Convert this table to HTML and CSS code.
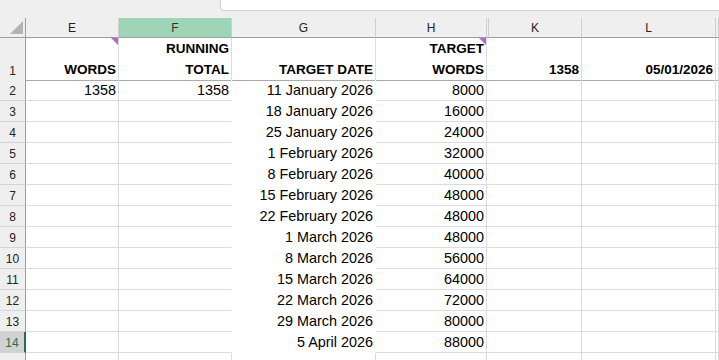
FILE: index.html
```html
<!DOCTYPE html>
<html>
<head>
<meta charset="utf-8">
<link rel="stylesheet" href="styles.css">
</head>
<body>
<div class="top"><div class="fbar"></div></div>
<div class="sheet">
  <div class="row hdr">
    <div class="corner"><span class="tri"></span></div>
    <div class="ch">E</div><div class="ch sel">F</div><div class="ch">G</div><div class="ch">H</div><div class="ch hidc"></div><div class="ch">K</div><div class="ch">L</div><div class="ch"></div>
  </div>
  <div class="row r1">
    <div class="rh">1</div>
    <div class="c b"><span class="note"></span><div>WORDS</div></div>
    <div class="c b"><div>RUNNING<br>TOTAL</div></div>
    <div class="c b"><div>TARGET DATE</div></div>
    <div class="c b"><span class="note"></span><div>TARGET<br>WORDS</div></div>
    <div class="c hid"></div>
    <div class="c b"><div>1358</div></div>
    <div class="c b"><div>05/01/2026</div></div>
    <div class="c"></div>
  </div>
  <div class="row rn"><div class="rh">2</div><div class="c">1358</div><div class="c fw">1358</div><div class="c wf">11 January 2026</div><div class="c">8000</div><div class="c hid"></div><div class="c"></div><div class="c"></div><div class="c"></div></div>
  <div class="row rn"><div class="rh">3</div><div class="c"></div><div class="c fw"></div><div class="c wf">18 January 2026</div><div class="c">16000</div><div class="c hid"></div><div class="c"></div><div class="c"></div><div class="c"></div></div>
  <div class="row rn"><div class="rh">4</div><div class="c"></div><div class="c fw"></div><div class="c wf">25 January 2026</div><div class="c">24000</div><div class="c hid"></div><div class="c"></div><div class="c"></div><div class="c"></div></div>
  <div class="row rn"><div class="rh">5</div><div class="c"></div><div class="c fw"></div><div class="c wf">1 February 2026</div><div class="c">32000</div><div class="c hid"></div><div class="c"></div><div class="c"></div><div class="c"></div></div>
  <div class="row rn"><div class="rh">6</div><div class="c"></div><div class="c fw"></div><div class="c wf">8 February 2026</div><div class="c">40000</div><div class="c hid"></div><div class="c"></div><div class="c"></div><div class="c"></div></div>
  <div class="row rn"><div class="rh">7</div><div class="c"></div><div class="c fw"></div><div class="c wf">15 February 2026</div><div class="c">48000</div><div class="c hid"></div><div class="c"></div><div class="c"></div><div class="c"></div></div>
  <div class="row rn"><div class="rh">8</div><div class="c"></div><div class="c fw"></div><div class="c wf">22 February 2026</div><div class="c">48000</div><div class="c hid"></div><div class="c"></div><div class="c"></div><div class="c"></div></div>
  <div class="row rn"><div class="rh">9</div><div class="c"></div><div class="c fw"></div><div class="c wf">1 March 2026</div><div class="c">48000</div><div class="c hid"></div><div class="c"></div><div class="c"></div><div class="c"></div></div>
  <div class="row rn"><div class="rh">10</div><div class="c"></div><div class="c fw"></div><div class="c wf">8 March 2026</div><div class="c">56000</div><div class="c hid"></div><div class="c"></div><div class="c"></div><div class="c"></div></div>
  <div class="row rn"><div class="rh">11</div><div class="c"></div><div class="c fw"></div><div class="c wf">15 March 2026</div><div class="c">64000</div><div class="c hid"></div><div class="c"></div><div class="c"></div><div class="c"></div></div>
  <div class="row rn"><div class="rh">12</div><div class="c"></div><div class="c fw"></div><div class="c wf">22 March 2026</div><div class="c">72000</div><div class="c hid"></div><div class="c"></div><div class="c"></div><div class="c"></div></div>
  <div class="row rn"><div class="rh">13</div><div class="c"></div><div class="c fw"></div><div class="c wf">29 March 2026</div><div class="c">80000</div><div class="c hid"></div><div class="c"></div><div class="c"></div><div class="c"></div></div>
  <div class="row rn"><div class="rh rsel">14</div><div class="c"></div><div class="c fw"></div><div class="c wf">5 April 2026</div><div class="c">88000</div><div class="c hid"></div><div class="c"></div><div class="c"></div><div class="c"></div></div>
  <div class="row rn"><div class="rh"></div><div class="c"></div><div class="c"></div><div class="c"></div><div class="c"></div><div class="c hid"></div><div class="c"></div><div class="c"></div><div class="c"></div></div>
</div>
</body>
</html>
```

FILE: styles.css
```css
* { box-sizing: border-box; }
html, body { margin: 0; padding: 0; }
body {
  width: 719px;
  height: 360px;
  overflow: hidden;
  background: #ffffff;
  font-family: "Liberation Sans", Arial, sans-serif;
  color: #000;
}
.top {
  height: 18px;
  background: #efefef;
  display: flex;
  justify-content: flex-end;
}
.fbar {
  width: 499px;
  height: 11px;
  background: #ffffff;
  border-left: 1px solid #d2d2d2;
  border-bottom: 1px solid #d2d2d2;
  border-bottom-left-radius: 4px;
}
.sheet { display: flex; flex-direction: column; }
.row {
  display: grid;
  grid-template-columns: 26px 93px 113px 144px 111px 2px 93px 134px 1fr;
}
.hdr { height: 20px; }
.r1 { height: 42px; }
.rn { height: 21px; }

.corner {
  background: #efefef;
  border-right: 1px solid #9e9e9e;
  border-bottom: 1px solid #9e9e9e;
  display: flex;
  align-items: flex-end;
  justify-content: flex-end;
  padding: 0 2px 3px 0;
}
.tri {
  width: 0;
  height: 0;
  border-bottom: 13px solid #b4b4b4;
  border-left: 13px solid transparent;
}
.ch {
  background: #efefef;
  border-right: 1px solid #cfcfcf;
  border-bottom: 1px solid #9e9e9e;
  display: flex;
  align-items: center;
  justify-content: center;
  font-size: 12px;
  color: #222;
  padding-top: 1px;
}
.ch.sel { background: #9fd5b7; color: #1c3d2a; }
.ch.hidc { border-right: 1px solid #cfcfcf; }

.rh {
  background: #efefef;
  border-right: 1px solid #9e9e9e;
  border-bottom: 1px solid #d4d4d4;
  display: flex;
  align-items: flex-end;
  justify-content: center;
  font-size: 12px;
  line-height: 18px;
  color: #222;
}
.rh.rsel {
  background: #d2d2d2;
  border-right: 2px solid #217346;
  color: #217346;
}

.c {
  position: relative;
  border-right: 1px solid #dcdcdc;
  border-bottom: 1px solid #dcdcdc;
  display: flex;
  align-items: flex-end;
  justify-content: flex-end;
  padding-right: 2px;
  font-size: 14.4px;
  line-height: 20px;
  white-space: nowrap;
  overflow: visible;
}
.r1 .c, .r1 .rh { border-bottom-color: #ababab; }
.b {
  font-weight: bold;
  font-size: 13.5px;
  line-height: 21px;
  text-align: right;
}
.hid { border-right: none; }
.fw { border-right-color: #ffffff; }
.wf { border-right-color: #ffffff; border-bottom-color: #ffffff; }
.note {
  position: absolute;
  top: 0;
  right: 0;
  width: 0;
  height: 0;
  border-top: 7px solid #b468c8;
  border-left: 7px solid transparent;
}
```
